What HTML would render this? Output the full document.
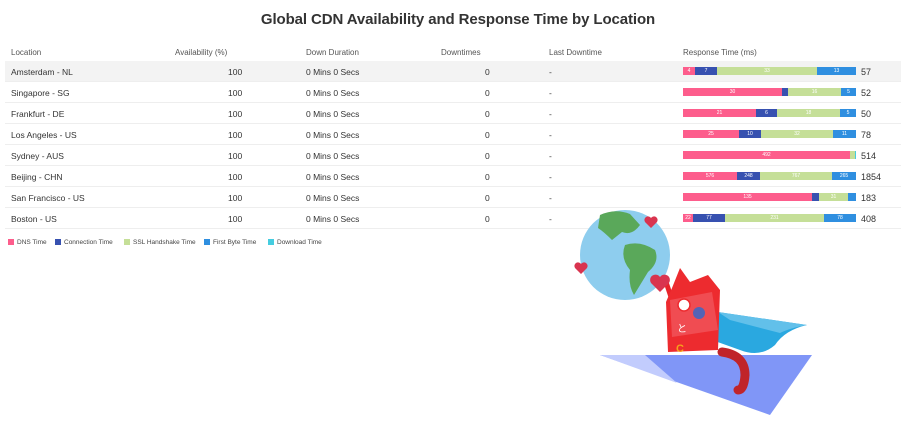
<!DOCTYPE html>
<html><head><meta charset="utf-8"><style>
*{margin:0;padding:0;box-sizing:border-box}
body{width:904px;height:424px;background:#fff;font-family:"Liberation Sans",sans-serif;color:#333;position:relative;overflow:hidden}
.t{position:absolute;left:0;width:916px;top:11px;text-align:center;font-size:15px;font-weight:bold;color:#333;letter-spacing:-0.1px}
.h{position:absolute;top:48px;font-size:8px;color:#555}
.row{position:absolute;left:5px;width:896px;height:21px;border-bottom:1px solid #eee;font-size:8.5px;color:#333}
.row span{position:absolute;top:6px}
.bar{position:absolute;left:678px;top:6px;height:8px;width:173px;display:flex}
.bar i{display:block;height:8px;font-style:normal;font-size:5px;color:#fff;text-align:center;line-height:8px}
.p{background:#fd5d8c}.b{background:#3751b0}.g{background:#c5df98}.l{background:#2f8fe0}.c{background:#45cde0}
.tot{position:absolute;left:856px;top:5px;font-size:9px}
.leg{position:absolute;top:239px;font-size:6.5px;color:#444}
.leg b{display:inline-block;width:6px;height:6px;vertical-align:-1px;margin-right:3px}
</style></head><body>
<div class="t">Global CDN Availability and Response Time by Location</div>
<div class="h" style="left:11px">Location</div>
<div class="h" style="left:175px">Availability (%)</div>
<div class="h" style="left:306px">Down Duration</div>
<div class="h" style="left:441px">Downtimes</div>
<div class="h" style="left:549px">Last Downtime</div>
<div class="h" style="left:683px">Response Time (ms)</div>

<div class="row" style="top:61px;background:#f3f3f3"><span style="left:6px">Amsterdam - NL</span><span style="left:223px">100</span><span style="left:301px">0 Mins 0 Secs</span><span style="left:480px">0</span><span style="left:544px">-</span>
<div class="bar"><i class="p" style="width:12px">4</i><i class="b" style="width:22px">7</i><i class="g" style="width:100px">33</i><i class="l" style="width:39px">13</i></div><span class="tot">57</span></div>
<div class="row" style="top:82px"><span style="left:6px">Singapore - SG</span><span style="left:223px">100</span><span style="left:301px">0 Mins 0 Secs</span><span style="left:480px">0</span><span style="left:544px">-</span>
<div class="bar"><i class="p" style="width:99px">30</i><i class="b" style="width:6px"></i><i class="g" style="width:53px">16</i><i class="l" style="width:15px">5</i></div><span class="tot">52</span></div>
<div class="row" style="top:103px"><span style="left:6px">Frankfurt - DE</span><span style="left:223px">100</span><span style="left:301px">0 Mins 0 Secs</span><span style="left:480px">0</span><span style="left:544px">-</span>
<div class="bar"><i class="p" style="width:73px">21</i><i class="b" style="width:21px">6</i><i class="g" style="width:63px">18</i><i class="l" style="width:16px">5</i></div><span class="tot">50</span></div>
<div class="row" style="top:124px"><span style="left:6px">Los Angeles - US</span><span style="left:223px">100</span><span style="left:301px">0 Mins 0 Secs</span><span style="left:480px">0</span><span style="left:544px">-</span>
<div class="bar"><i class="p" style="width:56px">25</i><i class="b" style="width:22px">10</i><i class="g" style="width:72px">32</i><i class="l" style="width:23px">11</i></div><span class="tot">78</span></div>
<div class="row" style="top:145px"><span style="left:6px">Sydney - AUS</span><span style="left:223px">100</span><span style="left:301px">0 Mins 0 Secs</span><span style="left:480px">0</span><span style="left:544px">-</span>
<div class="bar"><i class="p" style="width:167px">492</i><i class="g" style="width:5px"></i><i class="c" style="width:1px"></i></div><span class="tot">514</span></div>
<div class="row" style="top:166px"><span style="left:6px">Beijing - CHN</span><span style="left:223px">100</span><span style="left:301px">0 Mins 0 Secs</span><span style="left:480px">0</span><span style="left:544px">-</span>
<div class="bar"><i class="p" style="width:54px">576</i><i class="b" style="width:23px">248</i><i class="g" style="width:72px">767</i><i class="l" style="width:24px">265</i></div><span class="tot">1854</span></div>
<div class="row" style="top:187px"><span style="left:6px">San Francisco - US</span><span style="left:223px">100</span><span style="left:301px">0 Mins 0 Secs</span><span style="left:480px">0</span><span style="left:544px">-</span>
<div class="bar"><i class="p" style="width:129px">135</i><i class="b" style="width:7px"></i><i class="g" style="width:29px">31</i><i class="l" style="width:8px"></i></div><span class="tot">183</span></div>
<div class="row" style="top:208px"><span style="left:6px">Boston - US</span><span style="left:223px">100</span><span style="left:301px">0 Mins 0 Secs</span><span style="left:480px">0</span><span style="left:544px">-</span>
<div class="bar"><i class="p" style="width:10px">22</i><i class="b" style="width:32px">77</i><i class="g" style="width:99px">231</i><i class="l" style="width:32px">78</i></div><span class="tot">408</span></div>

<div class="leg" style="left:8px"><b class="p"></b>DNS Time</div>
<div class="leg" style="left:55px"><b class="b"></b>Connection Time</div>
<div class="leg" style="left:124px"><b class="g"></b>SSL Handshake Time</div>
<div class="leg" style="left:204px"><b class="l"></b>First Byte Time</div>
<div class="leg" style="left:268px"><b class="c"></b>Download Time</div>

<svg style="position:absolute;left:0;top:0" width="904" height="424">
<polygon points="600,355 812,355 770,415" fill="#8096f7"/>
<polygon points="600,355 645,355 677,383" fill="#c2ccfd"/>
<path d="M718,312 L807,325 Q785,330 775,345 Q760,358 740,350 L712,340Z" fill="#2aa8e0"/>
<path d="M718,312 L807,325 Q790,328 780,333 L730,320Z" fill="#62c0ea"/>
<circle cx="625" cy="255" r="45" fill="#8ecdee"/>
<path d="M600,215 Q615,208 630,214 L640,225 Q632,236 622,232 L612,240 Q604,232 598,228Z M625,245 Q640,240 655,250 Q660,262 648,272 L634,295 Q628,285 630,270 Q620,258 625,245Z" fill="#5aa85a"/>
<path d="M672,300 L666,282" stroke="#e8232a" stroke-width="5"/>
<path d="M672,288 L680,268 L690,282 L708,275 L720,290 L718,350 L668,352 L666,302Z" fill="#ed2b2f"/>
<path d="M670,300 L712,292 L718,330 L672,337Z" fill="#f04c52"/>
<circle cx="684" cy="305" r="6" fill="#fff" stroke="#ed2b2f" stroke-width="1.5"/>
<circle cx="699" cy="313" r="6" fill="#5563b5"/>
<text x="677" y="332" font-size="10" fill="#fff" font-family="Liberation Sans">と</text>
<text x="676" y="352" font-size="11" font-weight="bold" fill="#f6a21a" font-family="Liberation Sans">C</text>
<path d="M722,352 Q745,355 745,375 Q744,390 738,390" stroke="#c0242a" stroke-width="9" fill="none" stroke-linecap="round"/>
<path d="M651,228 l-6,-6 a3.5,3.5 0 0 1 6,-4 a3.5,3.5 0 0 1 6,4z" fill="#d9344f"/>
<path d="M581,274 l-6,-6 a3.5,3.5 0 0 1 6,-4 a3.5,3.5 0 0 1 6,4z" fill="#d9344f"/>
<path d="M660,292 l-9,-9 a5,5 0 0 1 9,-6 a5,5 0 0 1 9,6z" fill="#d9344f"/>
</svg>
</body></html>
